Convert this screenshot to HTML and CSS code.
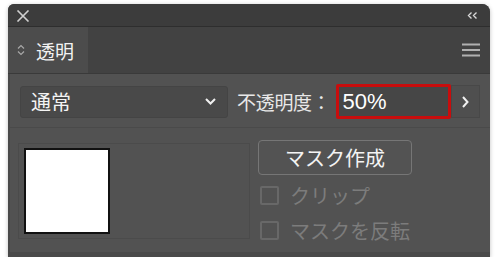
FILE: index.html
```html
<!DOCTYPE html>
<html lang="ja">
<head>
    <meta charset="UTF-8">
    <meta name="viewport" content="width=device-width, initial-scale=1.0">
    <title>透明</title>
    <link rel="stylesheet" href="styles.css">
</head>
<body>
    <div class="panel">
        <div class="titlebar">
            <svg class="close" width="14" height="12" viewBox="0 0 14 12">
                <path d="M1.5 0.5 L12.5 11.5 M12.5 0.5 L1.5 11.5" stroke="#d0d0d0" stroke-width="1.6" fill="none"/>
            </svg>
            <svg class="collapse" width="11" height="7" viewBox="0 0 11 7">
                <path d="M4.5 0.5 L1.5 3.5 L4.5 6.5 M9.5 0.5 L6.5 3.5 L9.5 6.5" stroke="#d8d8d8" stroke-width="1.4" fill="none"/>
            </svg>
        </div>
        <div class="tabs">
            <div class="tab">
                <svg class="updown" width="8" height="12" viewBox="0 0 8 12">
                    <path d="M1 4.5 L4 1.5 L7 4.5 M1 7.5 L4 10.5 L7 7.5" stroke="#a8a8a8" stroke-width="1.2" fill="none"/>
                </svg>
                <span class="tab-label">透明</span>
            </div>
            <div class="tab-rest">
                <svg class="menu" width="18" height="14" viewBox="0 0 18 14">
                    <path d="M0 1.5 H18 M0 7 H18 M0 12.5 H18" stroke="#b0b0b0" stroke-width="2" fill="none"/>
                </svg>
            </div>
        </div>
        <div class="content">
            <div class="row">
                <div class="select">
                    <span>通常</span>
                    <svg width="11" height="7" viewBox="0 0 11 7">
                        <path d="M1 1 L5.5 5.5 L10 1" stroke="#f0f0f0" stroke-width="2" fill="none"/>
                    </svg>
                </div>
                <span class="label">不透明度：</span>
                <div class="opacity">50%</div>
                <div class="next">
                    <svg width="7" height="12" viewBox="0 0 7 12">
                        <path d="M1 1 L5.5 6 L1 11" stroke="#f0f0f0" stroke-width="2" fill="none"/>
                    </svg>
                </div>
            </div>
            <div class="divider"></div>
            <div class="mask-area">
                <div class="thumb-frame">
                    <div class="thumb"></div>
                </div>
                <div class="mask-controls">
                    <button class="mask-btn">マスク作成</button>
                    <label class="check"><span class="box"></span>クリップ</label>
                    <label class="check"><span class="box"></span>マスクを反転</label>
                </div>
            </div>
        </div>
    </div>
</body>
</html>
```

FILE: styles.css
```css
body {
    margin: 0;
    background-color: #ffffff;
    font-family: "Noto Sans CJK JP", "Noto Sans", sans-serif;
}

.panel {
    margin: 4px 0 0 8px;
    width: 482px;
    height: 253px;
    display: flex;
    flex-direction: column;
    border-radius: 6px 8px 0 0;
    overflow: hidden;
    background-color: #525252;
    box-shadow: 0 1px 4px rgba(0, 0, 0, 0.25);
}

.titlebar {
    height: 22px;
    background-color: #3c3c3c;
    border-bottom: 1px solid #2e2e2e;
    display: flex;
    justify-content: space-between;
    align-items: center;
    padding: 0 12px 0 8px;
    flex-shrink: 0;
}

.close {
    margin-top: 2px;
}

.tabs {
    height: 46px;
    display: flex;
    background-color: #424242;
    border-bottom: 1px solid #3a3a3a;
    flex-shrink: 0;
}

.tab {
    width: 80px;
    background-color: #4c4c4c;
    display: flex;
    align-items: center;
    padding-left: 9px;
    box-sizing: border-box;
}

.tab-label {
    color: #f2f2f2;
    font-size: 19px;
    margin-left: 11px;
    line-height: 1;
}

.tab-rest {
    flex: 1;
    display: flex;
    justify-content: flex-end;
    align-items: center;
    padding-right: 10px;
}

.content {
    flex: 1;
    display: flex;
    flex-direction: column;
    border-left: 2px solid #484848;
    border-bottom: 5px solid #4a4a4a;
    padding-top: 10px;
}

.row {
    display: flex;
    align-items: center;
    height: 35px;
    padding-left: 10px;
}

.select {
    width: 208px;
    height: 32px;
    box-sizing: border-box;
    background-color: #494949;
    border: 1px solid #444444;
    border-radius: 3px;
    display: flex;
    justify-content: space-between;
    align-items: center;
    padding: 0 11px 0 10px;
    color: #f4f4f4;
    font-size: 20px;
}

.label {
    color: #e8e8e8;
    font-size: 19px;
    margin-left: 9px;
    letter-spacing: -0.3px;
}

.opacity {
    width: 115px;
    height: 35px;
    box-sizing: border-box;
    margin-left: 5px;
    border: 3px solid #c80d0d;
    border-radius: 2px;
    background-color: #464646;
    color: #ffffff;
    font-family: "Liberation Sans", Arial, sans-serif;
    font-size: 22px;
    display: flex;
    align-items: center;
    padding-left: 4px;
}

.next {
    width: 29px;
    height: 33px;
    box-sizing: border-box;
    background-color: #4f4f4f;
    border: 1px solid #484848;
    display: flex;
    justify-content: center;
    align-items: center;
}

.divider {
    height: 1px;
    margin: 8px 0 0 0;
    background-color: #4a4a4a;
}

.mask-area {
    display: flex;
    padding: 12px 0 0 8px;
}

.thumb-frame {
    width: 232px;
    height: 96px;
    box-sizing: border-box;
    border: 1px solid #4b4b4b;
    padding: 4px 5px;
    margin-top: 3px;
}

.thumb {
    width: 86px;
    height: 86px;
    box-sizing: border-box;
    background-color: #ffffff;
    border: 2px solid #111111;
}

.mask-controls {
    display: flex;
    flex-direction: column;
    margin-left: 8px;
}

.mask-btn {
    width: 154px;
    height: 35px;
    background-color: #535353;
    border: 1px solid #767676;
    border-radius: 4px;
    color: #f4f4f4;
    font-family: "Noto Sans CJK JP", "Noto Sans", sans-serif;
    font-size: 20px;
    padding: 0;
    line-height: 1;
}

.check {
    display: flex;
    align-items: center;
    color: #7c7c7c;
    font-size: 20px;
    height: 35px;
    margin-left: 2px;
}

.check:first-of-type {
    margin-top: 3px;
}

.box {
    width: 19px;
    height: 19px;
    box-sizing: border-box;
    border: 2px solid #686868;
    border-radius: 2px;
    margin-right: 11px;
}
```
